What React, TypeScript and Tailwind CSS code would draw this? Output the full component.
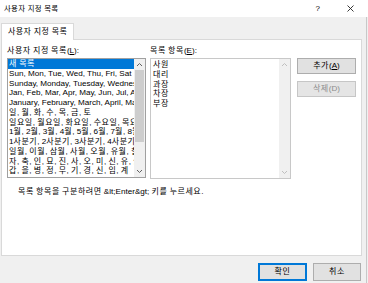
import React from "react";

const leftItems = [
  "새 목록",
  "Sun, Mon, Tue, Wed, Thu, Fri, Sat",
  "Sunday, Monday, Tuesday, Wednesday, Thursday, Friday, Saturday",
  "Jan, Feb, Mar, Apr, May, Jun, Jul, Aug, Sep, Oct, Nov, Dec",
  "January, February, March, April, May, June, July, August, September, October, November, December",
  "일, 월, 화, 수, 목, 금, 토",
  "일요일, 월요일, 화요일, 수요일, 목요일, 금요일, 토요일",
  "1월, 2월, 3월, 4월, 5월, 6월, 7월, 8월, 9월, 10월, 11월, 12월",
  "1사분기, 2사분기, 3사분기, 4사분기",
  "일월, 이월, 삼월, 사월, 오월, 유월, 칠월, 팔월, 구월, 시월, 동짓달, 섣달",
  "자, 축, 인, 묘, 진, 사, 오, 미, 신, 유, 술, 해",
  "갑, 을, 병, 정, 무, 기, 경, 신, 임, 계",
];

const rightItems = ["사원", "대리", "과장", "차장", "부장"];

const NOTE = "목록 항목을 구분하려면 &lt;Enter&gt; 키를 누르세요.";

function K({ t }: { t: string }) {
  const parts = t.split(/([\uAC00-\uD7A3]+)/);
  return (
    <>
      {parts.map((p, i) =>
        i % 2 === 1 ? (
          <span key={i} className="text-[8px] tracking-[0.55px]">
            {p}
          </span>
        ) : (
          <React.Fragment key={i}>{p}</React.Fragment>
        )
      )}
    </>
  );
}

function Chevron({ up, color }: { up: boolean; color: string }) {
  return (
    <svg width="7" height="5" viewBox="0 0 7 5">
      <path
        d={up ? "M1 4 L3.5 1.5 L6 4" : "M1 1 L3.5 3.5 L6 1"}
        fill="none"
        stroke={color}
        strokeWidth="1"
      />
    </svg>
  );
}

export default function App() {
  return (
    <div className="relative w-[368px] h-[283px] overflow-hidden bg-[#f0f0f0] text-[#000] text-[8.1px] font-['Liberation_Sans','Noto_Sans_CJK_KR',sans-serif]">
      {/* title bar */}
      <div className="h-[17px] bg-white flex items-center pl-[4px]">
        <span className="text-[7.4px] tracking-[0.3px] leading-[10px] text-[#000]">사용자 지정 목록</span>
        <span className="ml-auto text-[8px] leading-[10px] mr-[27px]">?</span>
        <svg width="7" height="7" viewBox="0 0 7 7" className="mr-[14px]">
          <path d="M0.5 0.5 L6.5 6.5 M6.5 0.5 L0.5 6.5" stroke="#222" strokeWidth="0.9" />
        </svg>
      </div>

      {/* right edge line */}
      <div className="absolute right-[1px] top-[17px] bottom-0 w-px bg-[#c8c8c8]" />

      {/* tab */}
      <div className="mt-[6px] ml-[1px] w-[73px] h-[17px] bg-white border border-b-0 border-[#d9d9d9] flex items-center pl-[6px] relative z-10">
        <span className="text-[8px] tracking-[0.35px] leading-[10px]">사용자 지정 목록</span>
      </div>

      {/* panel */}
      <div className="-mt-px ml-[1px] w-[361px] h-[217px] bg-white border border-[#d9d9d9] pl-[5px] pt-[5px]">
        <div className="flex">
          {/* left column */}
          <div className="w-[139px]">
            <div className="h-[12px] leading-[12px] whitespace-nowrap">
              <K t={"사용자 지정 목록("} />
              <span className="underline">L</span>):
            </div>
            <div className="mt-[1px] h-[120px] border border-[#a0a0a0] flex">
              <div className="flex-1 overflow-hidden leading-[9.75px]">
                {leftItems.map((t, i) => (
                  <div
                    key={i}
                    className={
                      i === 0
                        ? "h-[9.75px] whitespace-nowrap bg-[#0078d7] text-white pl-[1px]"
                        : "h-[9.75px] whitespace-nowrap pl-[1px]"
                    }
                  >
                    <K t={t} />
                  </div>
                ))}
              </div>
              <div className="w-[11px] bg-[#f0f0f0] flex flex-col items-center">
                <div className="h-[11px] flex items-center justify-center">
                  <Chevron up color="#606060" />
                </div>
                <div className="w-[9px] h-[72px] bg-[#cdcdcd]" />
                <div className="flex-1" />
                <div className="h-[11px] flex items-center justify-center">
                  <Chevron up={false} color="#606060" />
                </div>
              </div>
            </div>
          </div>

          {/* right list */}
          <div className="ml-[4px] w-[141px]">
            <div className="h-[12px] leading-[12px] whitespace-nowrap">
              <K t={"목록 항목("} />
              <span className="underline">E</span>):
            </div>
            <div className="mt-[1px] h-[121px] border border-[#c8c8c8] flex">
              <div className="flex-1 pt-[1px] pl-[2px] leading-[9.75px]">
                {rightItems.map((t) => (
                  <div key={t} className="h-[9.75px]">
                    <K t={t} />
                  </div>
                ))}
              </div>
              <div className="w-[11px] bg-[#f0f0f0] flex flex-col items-center">
                <div className="h-[11px] flex items-center justify-center">
                  <Chevron up color="#bfbfbf" />
                </div>
                <div className="flex-1" />
                <div className="h-[11px] flex items-center justify-center">
                  <Chevron up={false} color="#bfbfbf" />
                </div>
              </div>
            </div>
          </div>

          {/* buttons */}
          <div className="ml-[6px] pt-[13px] flex flex-col gap-[7px]">
            <div className="w-[59px] h-[16px] bg-[#e1e1e1] border border-[#adadad] flex items-center justify-center">
              <span>
                <K t={"추가("} />
                <span className="underline">A</span>)
              </span>
            </div>
            <div className="w-[59px] h-[16px] bg-[#e5e5e5] border border-[#c6c6c6] flex items-center justify-center text-[#8c8c8c]">
              <span>
                <K t={"삭제(D)"} />
              </span>
            </div>
          </div>
        </div>

        <div className="mt-[8px] pl-[11px] leading-[10px] whitespace-nowrap">
          <K t={NOTE} />
        </div>
      </div>

      {/* bottom buttons */}
      <div className="flex justify-end gap-[6px] pr-[7px] mt-[7px]">
        <div className="w-[49px] h-[18px] bg-[#e1e1e1] border-2 border-[#0078d7] flex items-center justify-center">
          <span className="text-[8px] tracking-[0.55px]">확인</span>
        </div>
        <div className="w-[48px] h-[18px] bg-[#e1e1e1] border border-[#adadad] flex items-center justify-center">
          <span className="text-[8px] tracking-[0.55px]">취소</span>
        </div>
      </div>
    </div>
  );
}
